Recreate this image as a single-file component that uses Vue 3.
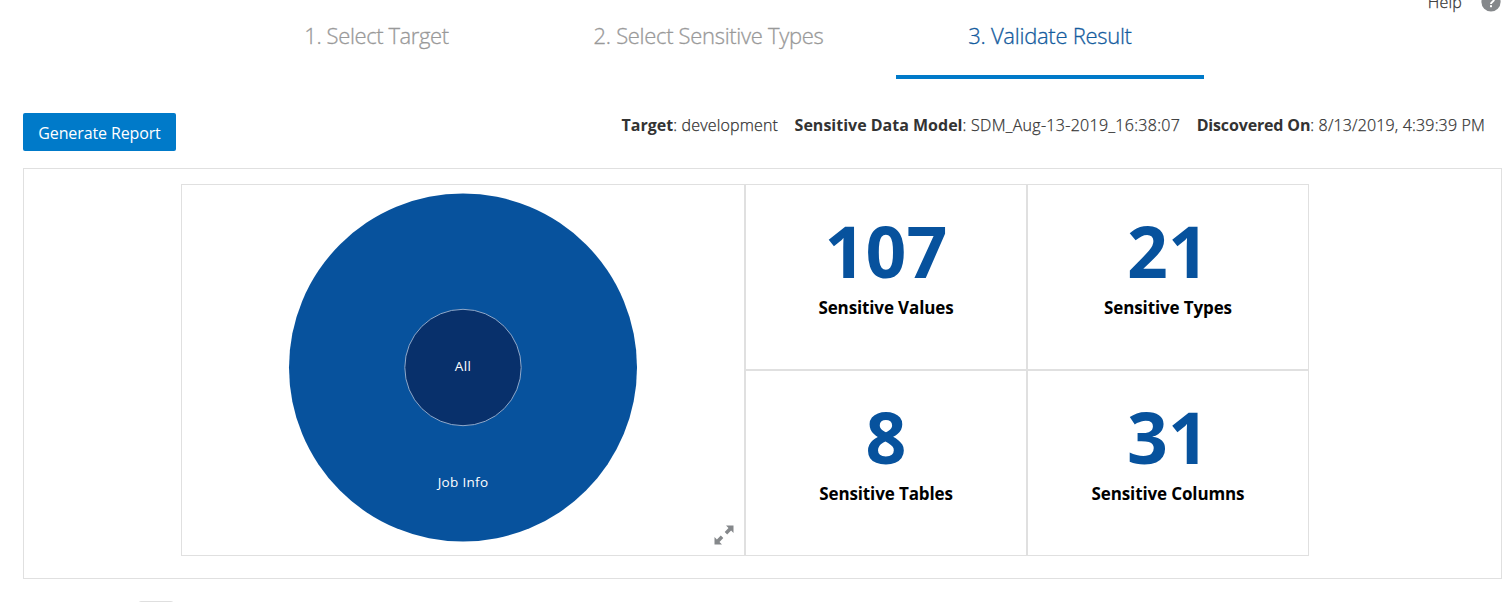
<script setup>
const steps = [
  { label: '1. Select Target', cls: 'step-a' },
  { label: '2. Select Sensitive Types', cls: 'step-b' },
  { label: '3. Validate Result', cls: 'step-c active' },
]
const details = [
  { name: 'Target', value: 'development', cls: 'd-a' },
  { name: 'Sensitive Data Model', value: 'SDM_Aug-13-2019_16:38:07', cls: 'd-b' },
  { name: 'Discovered On', value: '8/13/2019, 4:39:39 PM', cls: 'd-c' },
]
const stats = [
  { count: 107, label: 'Sensitive Values' },
  { count: 21, label: 'Sensitive Types' },
  { count: 8, label: 'Sensitive Tables' },
  { count: 31, label: 'Sensitive Columns' },
]
</script>

<template>
  <main class="page">
    <div class="help">
      <span class="help-text">Help</span>
      <svg class="help-icon" width="20" height="20" viewBox="0 0 20 20">
        <circle cx="10" cy="10" r="9.6" fill="#85888b" />
        <path d="M7 7.8C7 3.8 13 3.8 13 7.4C13 9.8 10 9.6 10 12" fill="none" stroke="#fff" stroke-width="2" />
        <rect x="9" y="13.2" width="2" height="2" fill="#fff" />
      </svg>
    </div>
    <nav class="steps">
      <div v-for="s in steps" :key="s.label" class="step" :class="s.cls"><span>{{ s.label }}</span></div>
    </nav>
    <div class="toolbar">
      <button class="report"><span>Generate Report</span></button>
      <div class="details">
        <span v-for="d in details" :key="d.name" class="detail" :class="d.cls"><b>{{ d.name }}</b><span class="value">: {{ d.value }}</span></span>
      </div>
    </div>
    <section class="panel">
      <div class="cell chart">
        <svg class="sunburst" width="562" height="370" viewBox="0 0 562 370">
          <circle cx="281" cy="182.5" r="174" fill="#07529d" />
          <circle cx="281" cy="182.5" r="58.2" fill="#08306b" stroke="#8fa9cb" stroke-width="1" />
          <text x="281" y="186">All</text>
          <text x="281" y="302">Job Info</text>
        </svg>
        <svg class="expand" width="20" height="20" viewBox="0 0 20 20" fill="#85888b">
          <path d="M12 0.5H19.5V8L17.1 5.6L13.2 9.4L10.7 6.9L14.5 3Z" />
          <path d="M8 19.5H0.5V12L2.9 14.4L6.8 10.6L9.3 13.1L5.5 17Z" />
        </svg>
      </div>
      <div class="stats">
        <div v-for="s in stats" :key="s.label" class="cell stat">
          <div class="count">{{ s.count }}</div>
          <div class="label">{{ s.label }}</div>
        </div>
      </div>
    </section>
    <div class="handle"></div>
  </main>
</template>

<style>
body { background: #fff; overflow: hidden; }
</style>
<style scoped>
.page {
  position: relative;
  width: 1510px;
  height: 602px;
  overflow: hidden;
  box-sizing: border-box;
  background: #fff;
  color: #333;
  font-family: "Segoe UI", "Open Sans", sans-serif;
}
.help {
  position: absolute;
  top: -8px;
  right: 9px;
  display: flex;
  align-items: center;
  gap: 19px;
  height: 20px;
  font-size: 16px;
  font-weight: 300;
  line-height: 20px;
}
.help-text { letter-spacing: 0.2px; -webkit-text-stroke: 0.25px currentColor; }
.steps { display: flex; height: 79px; padding-left: 232px; }
.step {
  box-sizing: border-box;
  height: 79px;
  text-align: center;
  font-size: 22px;
  font-weight: 300;
  -webkit-text-stroke: 0.3px currentColor;
  line-height: 70px;
  color: #999;
  white-space: nowrap;
}
.step-a { width: 289px; letter-spacing: -0.4px; }
.step-b { width: 375px; letter-spacing: -0.32px; }
.step-c { width: 308px; letter-spacing: -0.28px; }
.active { color: #145c9e; border-bottom: 4px solid #007ac9; }
.toolbar {
  display: flex;
  justify-content: space-between;
  margin-top: 34px;
  height: 38px;
  padding: 0 25px 0 23px;
}
.report {
  width: 153px;
  height: 38px;
  padding: 1px 0 0;
  border: 0;
  border-radius: 2px;
  background: #007ac9;
  color: #fff;
  font-family: inherit;
  font-size: 16px;
  letter-spacing: -0.12px;
  line-height: 38px;
  white-space: nowrap;
}
.details { display: flex; gap: 16.5px; font-size: 16px; line-height: 24px; white-space: nowrap; }
.value { font-weight: 300; -webkit-text-stroke: 0.25px currentColor; }
.d-a .value { letter-spacing: 0.17px; }
.d-b .value { letter-spacing: 0.3px; }
.d-c b { letter-spacing: -0.15px; }
.d-c .value { letter-spacing: 0.16px; }
.panel {
  display: flex;
  justify-content: flex-start;
  box-sizing: border-box;
  width: 1479px;
  height: 411px;
  margin: 17px 0 0 23px;
  padding: 15px 0 0 157px;
  border: 1px solid #e0e0e0;
}
.cell { box-sizing: border-box; border: 1px solid #e0e0e0; }
.chart { position: relative; width: 564px; height: 372px; }
.sunburst { display: block; }
.sunburst text { fill: #fff; font-size: 13.5px; letter-spacing: 0.3px; text-anchor: middle; }
.expand { position: absolute; left: 532px; top: 340px; }
.stats { display: grid; grid-template-columns: 282px 282px; grid-template-rows: 186px 186px; height: 372px; }
.stat { padding-top: 28px; text-align: center; }
.count { height: 76px; line-height: 76px; font-size: 71.5px; letter-spacing: 0.2px; font-weight: 700; color: #07529d; }
.label { margin-top: 6px; font-size: 17px; letter-spacing: -0.12px; line-height: 26px; font-weight: 700; color: #000; }
.handle { box-sizing: border-box; width: 36px; height: 20px; margin: 22px 0 0 138px; border: 1px solid #dfdfdf; border-radius: 3px; }
</style>
